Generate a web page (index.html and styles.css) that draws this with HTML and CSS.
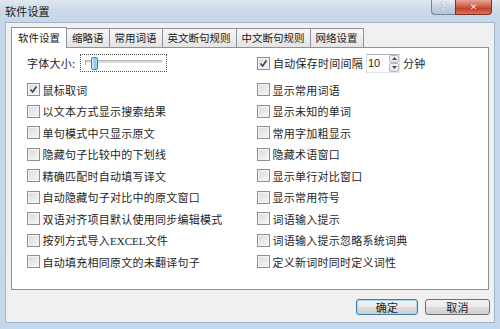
FILE: index.html
```html
<!DOCTYPE html>
<html lang="zh">
<head>
<meta charset="utf-8">
<title>软件设置</title>
<link rel="stylesheet" href="styles.css">
</head>
<body>
<div class="window">
  <div class="titlebar">
    <span class="title">软件设置</span>
    <div class="caption">
      <div class="cap help">?</div>
      <div class="cap close">✕</div>
    </div>
  </div>
  <div class="client">
    <div class="tabs">
      <div class="tab selected">软件设置</div>
      <div class="tab">缩略语</div>
      <div class="tab">常用词语</div>
      <div class="tab">英文断句规则</div>
      <div class="tab">中文断句规则</div>
      <div class="tab">网络设置</div>
    </div>
    <div class="panel">
      <div class="toprow">
        <div class="fontsize">
          <span class="lbl">字体大小:</span>
          <div class="slider">
            <div class="track"><span class="tick"></span><span class="thumb"></span></div>
          </div>
        </div>
        <div class="autosave">
          <span class="cb checked"><svg viewBox="0 0 13 13"><polyline points="3,6.5 5.5,9.5 10,3" /></svg></span>
          <span class="txt">自动保存时间间隔</span>
          <div class="spin">
            <span class="val">10</span>
            <div class="arrows">
              <span class="arr"><svg viewBox="0 0 7 4"><polygon points="0,4 3.5,0 7,4" /></svg></span>
              <span class="arr"><svg viewBox="0 0 7 4"><polygon points="0,0 7,0 3.5,4" /></svg></span>
            </div>
          </div>
          <span class="txt">分钟</span>
        </div>
      </div>
      <div class="grid">
        <div class="item"><span class="cb checked"><svg viewBox="0 0 13 13"><polyline points="3,6.5 5.5,9.5 10,3" /></svg></span><span class="txt">鼠标取词</span></div>
        <div class="item"><span class="cb"></span><span class="txt">显示常用词语</span></div>
        <div class="item"><span class="cb"></span><span class="txt">以文本方式显示搜索结果</span></div>
        <div class="item"><span class="cb"></span><span class="txt">显示未知的单词</span></div>
        <div class="item"><span class="cb"></span><span class="txt">单句模式中只显示原文</span></div>
        <div class="item"><span class="cb"></span><span class="txt">常用字加粗显示</span></div>
        <div class="item"><span class="cb"></span><span class="txt">隐藏句子比较中的下划线</span></div>
        <div class="item"><span class="cb"></span><span class="txt">隐藏术语窗口</span></div>
        <div class="item"><span class="cb"></span><span class="txt">精确匹配时自动填写译文</span></div>
        <div class="item"><span class="cb"></span><span class="txt">显示单行对比窗口</span></div>
        <div class="item"><span class="cb"></span><span class="txt">自动隐藏句子对比中的原文窗口</span></div>
        <div class="item"><span class="cb"></span><span class="txt">显示常用符号</span></div>
        <div class="item"><span class="cb"></span><span class="txt">双语对齐项目默认使用同步编辑模式</span></div>
        <div class="item"><span class="cb"></span><span class="txt">词语输入提示</span></div>
        <div class="item"><span class="cb"></span><span class="txt">按列方式导入<span class="latin">EXCEL</span>文件</span></div>
        <div class="item"><span class="cb"></span><span class="txt">词语输入提示忽略系统词典</span></div>
        <div class="item"><span class="cb"></span><span class="txt">自动填充相同原文的未翻译句子</span></div>
        <div class="item"><span class="cb"></span><span class="txt">定义新词时同时定义词性</span></div>
      </div>
    </div>
    <div class="buttons">
      <div class="btn default ok">确定</div>
      <div class="btn cancel">取消</div>
    </div>
  </div>
</div>
</body>
</html>
```

FILE: styles.css
```css
* { box-sizing: border-box; }
html, body { margin: 0; padding: 0; }
body {
  width: 500px;
  height: 329px;
  overflow: hidden;
  font-family: "Noto Sans CJK SC", "Noto Sans", sans-serif;
  color: #1e1e1e;
}
.window {
  width: 500px;
  height: 329px;
  background: linear-gradient(to bottom, #dfe7ef 0, #cad8e6 12px, #c6d7ea 22px, #c4d8ee 100%);
  display: flex;
  flex-direction: column;
}
.titlebar {
  height: 22px;
  display: flex;
  align-items: flex-start;
  justify-content: space-between;
  padding-left: 5px;
  padding-right: 8px;
}
.title {
  font-size: 11px;
  line-height: 22px;
  letter-spacing: 0.2px;
  color: #1a1a1a;
}
.caption { display: flex; }
.cap {
  height: 15px;
  display: flex;
  align-items: center;
  justify-content: center;
  font-family: "DejaVu Sans", sans-serif;
  font-weight: bold;
  font-size: 10px;
  line-height: 1;
}
.help {
  width: 24px;
  border: 1px solid #71859c;
  border-top: none;
  border-right: none;
  border-bottom-left-radius: 4px;
  background: linear-gradient(to bottom, #e6edf4, #c3d0de 55%, #b6c6d8);
  color: #f4f8fc;
  text-shadow: 0 0 1px #4d6178;
}
.close {
  width: 37px;
  border: 1px solid #7d3025;
  border-top: none;
  border-bottom-right-radius: 4px;
  background: linear-gradient(to bottom, #e7a596, #cf5a45 50%, #c13f2b 60%, #d9735f);
  color: #ffffff;
  text-shadow: 0 0 1px #5a1d14;
  font-size: 9px;
}
.client {
  height: 301px;
  margin: 0 5px;
  background: #f0f0f0;
  border: 1px solid #9fb3ca;
  padding: 4px 4px 0 5px;
}
.tabs {
  display: flex;
  align-items: flex-end;
  height: 20px;
}
.tab {
  height: 19px;
  padding: 0 5px;
  margin-left: -1px;
  border: 1px solid #8e9199;
  border-bottom: none;
  background: linear-gradient(to bottom, #f6f6f6, #e4e4e4);
  font-size: 10.5px;
  line-height: 18px;
  color: #1a1a1a;
  white-space: nowrap;
  flex: none;
}
.tab.selected {
  margin-left: 0;
  height: 21px;
  margin-bottom: -1px;
  padding: 0 6px;
  background: #ffffff;
  position: relative;
  z-index: 1;
  line-height: 20px;
}
.panel {
  width: 478px;
  height: 243px;
  background: #ffffff;
  border: 1px solid #8e9199;
  padding: 4px 0 0 15px;
}
.toprow {
  display: flex;
  height: 22px;
  align-items: center;
  margin-bottom: 5px;
}
.fontsize {
  width: 230px;
  display: flex;
  align-items: center;
}
.lbl, .txt {
  font-size: 11px;
  letter-spacing: 0.25px;
  line-height: 14px;
  white-space: nowrap;
}
.latin {
  font-family: "Liberation Serif", serif;
  font-size: 11px;
  letter-spacing: 0;
}
.slider {
  margin-left: 5px;
  width: 87px;
  height: 18px;
  border: 1px dotted #555;
  display: flex;
  align-items: center;
  padding: 0 4px;
}
.track {
  flex: 1;
  height: 3px;
  background: #dadada;
  border-top: 1px solid #b8b8b8;
  display: flex;
  align-items: center;
  margin-top: -3px;
}
.tick {
  width: 1px;
  height: 5px;
  background: #b0b0b0;
}
.thumb {
  margin-left: 5px;
  width: 7px;
  height: 13px;
  flex: none;
  border: 1px solid #3c7fb1;
  border-radius: 2px;
  background: linear-gradient(to right, #d4f0fb, #7cc8ea 60%, #a9dcf3);
  margin-top: 3px;
}
.autosave {
  display: flex;
  align-items: center;
}
.autosave .cb { margin-right: 3px; }
.spin {
  margin-left: 3px;
  margin-right: 3px;
  width: 34px;
  height: 19px;
  border: 1px solid #e2e3ea;
  border-top-color: #abadb3;
  display: flex;
  align-items: center;
  justify-content: space-between;
  background: #fff;
}
.val {
  font-family: "Liberation Sans", sans-serif;
  font-size: 11px;
  padding-left: 1px;
}
.arrows {
  display: flex;
  flex-direction: column;
  height: 17px;
  width: 10px;
}
.arr {
  flex: 1;
  display: flex;
  align-items: center;
  justify-content: center;
  border: 1px solid #b5b8c0;
  border-radius: 2px;
  background: linear-gradient(to bottom, #f5f6f8, #e1e4e9);
}
.arr svg { width: 5px; height: 3px; fill: #3f4a5a; }
.grid {
  display: grid;
  grid-template-columns: 230px 1fr;
  grid-auto-rows: 21.5px;
}
.item {
  display: flex;
  align-items: center;
}
.cb {
  width: 13px;
  height: 13px;
  flex: none;
  border: 1px solid #8f8f8f;
  background: linear-gradient(135deg, #dcdcdc, #f6f6f6);
  box-shadow: inset 0 0 0 1px #f4f4f4;
  display: flex;
  align-items: center;
  justify-content: center;
  margin-right: 2.5px;
}
.cb svg {
  width: 11px;
  height: 11px;
  fill: none;
  stroke: #2b3e64;
  stroke-width: 1.8;
}
.buttons {
  display: flex;
  justify-content: flex-end;
  gap: 7px;
  margin-top: 9px;
}
.btn {
  height: 16px;
  border: 1px solid #707070;
  border-radius: 3px;
  background: linear-gradient(to bottom, #f2f2f2 0, #ebebeb 50%, #dddddd 51%, #cfcfcf 100%);
  font-size: 11px;
  line-height: 14px;
  text-align: center;
  letter-spacing: 0.3px;
}
.btn.ok { width: 62px; }
.btn.cancel { width: 65px; }
.btn.default {
  border-color: #3c7fb1;
  box-shadow: inset 0 0 0 1px #a9d6f2;
}
```
